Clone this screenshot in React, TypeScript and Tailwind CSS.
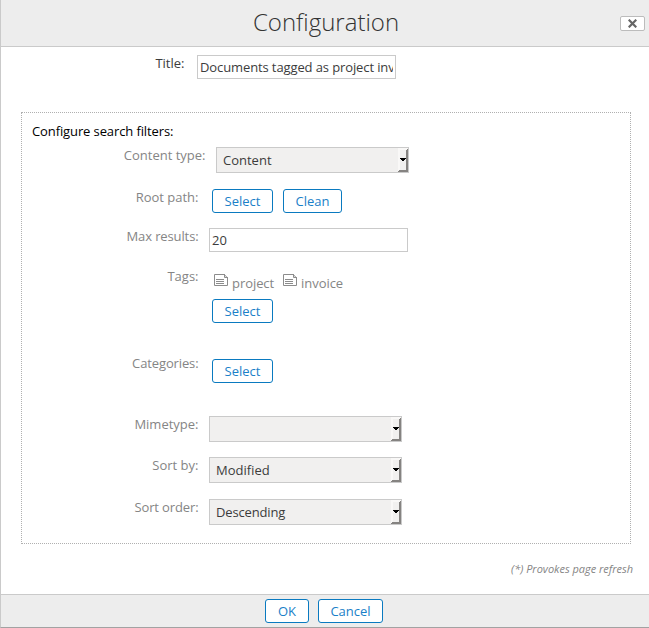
import type { ReactNode } from "react";

function Row({ label, height, children, wide = false, offset = "pt-px", tracking = "" }: {
  label: string; height: string; children: ReactNode; wide?: boolean; offset?: string; tracking?: string;
}) {
  return (
    <div className={`flex items-start ${height}`}>
      <div className={`mr-[10.5px] shrink-0 whitespace-nowrap text-right text-[#858585] ${tracking} ${wide ? "w-[183.5px]" : "w-[176.5px]"}`}>{label}</div>
      <div className={offset}>{children}</div>
    </div>
  );
}

function Button({ children, width }: { children: ReactNode; width: string }) {
  return (
    <button className={`flex h-6 items-center justify-center rounded-[3px] border border-[#0a7ac0] bg-white leading-[18px] text-[#1a80c8] ${width}`}>
      {children}
    </button>
  );
}

function Select({ value, tracking = "" }: { value: string; tracking?: string }) {
  return (
    <div className="flex h-[26px] w-[193px] border border-[#cacaca] bg-[#f1f0ef] pl-[6px] text-[#3c3c3c]">
      <span className={`grow pt-[3px] ${tracking}`}>{value}</span>
      <svg width="10" height="24" viewBox="0 0 10 24" shapeRendering="crispEdges">
        <path d="M0 0h10v24H0z" fill="#f9f8f7" />
        <path d="M2 2h6v20H2z" fill="#f1f0ef" />
        <path d="M8 2h1V1h1v23H0v-1h1v-1h7z" fill="#858381" />
        <path d="M2 10h6v1H7v1H6v1H4v-1H3v-1H2z" fill="#000" />
      </svg>
    </div>
  );
}

function Tag({ children }: { children: ReactNode }) {
  return (
    <span className="flex items-start">
      <svg className="mr-[4px]" width="14" height="12" viewBox="0 0 14 12" fill="none" stroke="#8c8c8c">
        <path d="M.5.5h9.7l3.3 3.3v7.7H.5zM10.5 0v3.5H14M2 5.5h8M2 7.5h8M2 9.5h8" />
      </svg>
      <span className="tracking-[-0.06px]">{children}</span>
    </span>
  );
}

export default function App() {
  return (
    <div className="flex h-[628px] w-[649px] flex-col overflow-hidden border-b border-l border-b-[#a2a2a2] border-l-[#cacaca] bg-white font-['Open_Sans','Noto_Sans',sans-serif] text-[13px] leading-[18px] text-[#3c3c3c]">
      <header className="flex h-[47px] shrink-0 border-b border-[#cacaca] bg-[#ededed]">
        <div className="w-[31px]" />
        <h1 className="grow pt-[5px] text-center text-[24px] font-light leading-[34px] text-[#333]">Configuration</h1>
        <button className="mr-[4px] mt-4 flex h-[15px] w-[25px] items-center justify-center rounded-[2px] border border-[#bcbcbc] bg-white">
          <svg width="9" height="9" viewBox="0 0 9 9" stroke="#666" strokeWidth="2.2">
            <path d="M.7.7l7.6 7.6M8.3.7L.7 8.3" />
          </svg>
        </button>
      </header>
      <main className="grow">
        <div className="flex h-[65px] pt-[7px]">
          <div className="mr-[12.5px] w-[183.5px] text-right">Title:</div>
          <input
            className="mt-px h-6 w-[199px] border border-[#cacaca] px-[2px] pb-px tracking-[-0.11px] outline-none"
            defaultValue="Documents tagged as project invoice"
          />
        </div>
        <section className="ml-5 h-[432px] w-[610px] border border-dotted border-[#b0b0b0] pt-[9px]">
          <h2 className="h-6 pl-[10px] tracking-[-0.11px] text-black">Configure search filters:</h2>
          <Row label="Content type:" height="h-[42px]" wide><Select value="Content" /></Row>
          <Row label="Root path:" height="h-[39px]">
            <div className="ml-[3px] flex gap-[10px]">
              <Button width="w-[61px]">Select</Button>
              <Button width="w-[59px]">Clean</Button>
            </div>
          </Row>
          <Row label="Max results:" height="h-10" tracking="tracking-[-0.12px]">
            <input
              className="block h-6 w-[199px] border border-[#cacaca] px-[2px] pb-px outline-none"
              defaultValue="20"
            />
          </Row>
          <Row label="Tags:" height="h-[87px]" offset="pt-[7px]">
            <div className="ml-[5px] flex gap-[9px] text-[#858585]">
              <Tag>project</Tag>
              <Tag>invoice</Tag>
            </div>
            <div className="ml-[3px] mt-[7px]"><Button width="w-[61px]">Select</Button></div>
          </Row>
          <Row label="Categories:" height="h-[61px]" offset="pt-[5px]" tracking="tracking-[-0.12px]">
            <div className="ml-[3px]"><Button width="w-[61px]">Select</Button></div>
          </Row>
          <Row label="Mimetype:" height="h-[41px]"><Select value="" /></Row>
          <Row label="Sort by:" height="h-[42px]"><Select value="Modified" /></Row>
          <Row label="Sort order:" height="h-[27px]" tracking="tracking-[-0.12px]"><Select value="Descending" tracking="tracking-[-0.15px]" /></Row>
        </section>
        <p className="pr-4 pt-[17px] text-right text-[11px] italic leading-[15px] tracking-[-0.02px] text-[#858585]">(*) Provokes page refresh</p>
      </main>
      <footer className="flex h-[33px] shrink-0 justify-center gap-[9px] border-t border-[#cacaca] bg-[#ededed] pr-[2px] pt-1">
        <Button width="w-[44px]">OK</Button>
        <Button width="w-[65px]">Cancel</Button>
      </footer>
    </div>
  );
}
